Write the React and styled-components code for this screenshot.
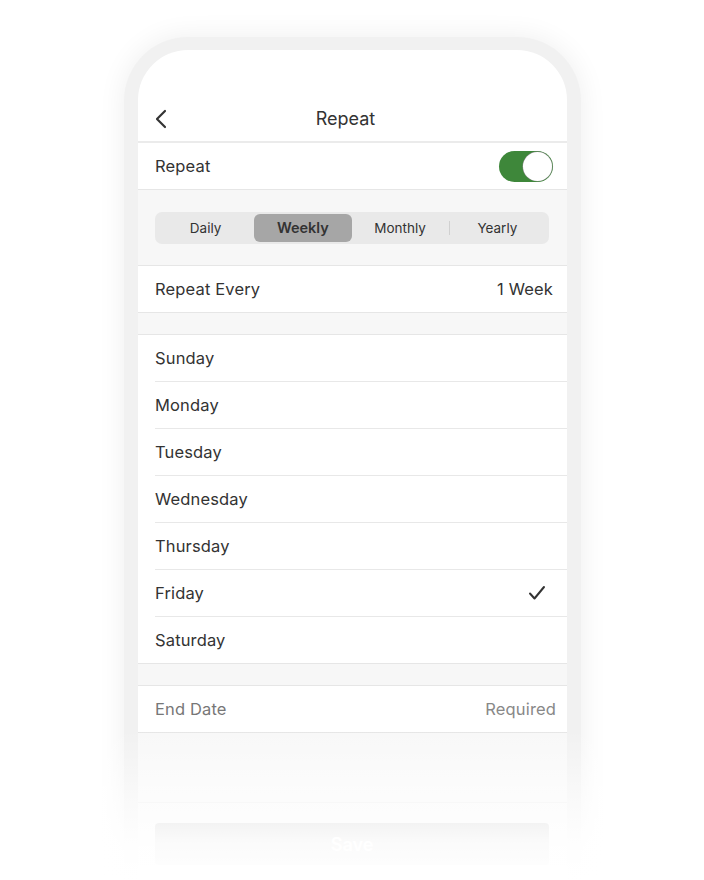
import { useState } from "react";
import styled, { createGlobalStyle } from "styled-components";

const GlobalStyle = createGlobalStyle`
    body {
        margin: 0;
        background: #fff;
        font-family: Inter, "Noto Sans", "Liberation Sans", sans-serif;
        color: #333;
    }
`;

const DAYS = ["Sunday", "Monday", "Tuesday", "Wednesday", "Thursday", "Friday", "Saturday"];
const MODES = ["Daily", "Weekly", "Monthly", "Yearly"];

export default function App() {
    const [on, setOn] = useState(true);
    const [mode, setMode] = useState("Weekly");
    const [day, setDay] = useState("Friday");

    return (
        <Page>
            <GlobalStyle />
            <Phone>
                <Screen>
                    <Nav>
                        <Back aria-label="Back">
                            <svg width="14" height="20" viewBox="0 0 14 20" fill="none">
                                <path d="M11 2 L3 10 L11 18" stroke="#333" strokeWidth="2.2" strokeLinecap="round" strokeLinejoin="round" />
                            </svg>
                        </Back>
                        <Title>Repeat</Title>
                    </Nav>
                    <Row>
                        <Label>Repeat</Label>
                        <Toggle on={on} onClick={() => setOn(!on)}>
                            <Knob on={on} />
                        </Toggle>
                    </Row>
                    <SegmentArea>
                        <Segmented>
                            {MODES.map((m, i) => (
                                <Segment
                                    key={m}
                                    active={mode === m}
                                    divider={i === 3 && mode !== "Monthly" && mode !== "Yearly"}
                                    onClick={() => setMode(m)}
                                >
                                    {m}
                                </Segment>
                            ))}
                        </Segmented>
                    </SegmentArea>
                    <Row topBorder>
                        <Label>Repeat Every</Label>
                        <Value>1 Week</Value>
                    </Row>
                    <Gap />
                    <List>
                        {DAYS.map((d, i) => (
                            <DayRow key={d} last={i === DAYS.length - 1} onClick={() => setDay(d)}>
                                <Label>{d}</Label>
                                {day === d && (
                                    <svg width="18" height="16" viewBox="0 0 18 16" fill="none">
                                        <path d="M2 8.5 L6.5 13.5 L16 2" stroke="#333" strokeWidth="2" strokeLinecap="round" strokeLinejoin="round" />
                                    </svg>
                                )}
                            </DayRow>
                        ))}
                    </List>
                    <Gap />
                    <Row topBorder tight>
                        <Label muted>End Date</Label>
                        <Value muted>Required</Value>
                    </Row>
                    <Footer>
                        <FooterLine />
                        <SaveButton>Save</SaveButton>
                    </Footer>
                </Screen>
            </Phone>
            <Fade />
        </Page>
    );
}

const Page = styled.div`
    position: relative;
    width: 704px;
    height: 880px;
    overflow: hidden;
    background: #fff;
`;

const Phone = styled.div`
    margin: 37px 0 0 124px;
    width: 429px;
    padding: 13px 14px 0;
    border-radius: 64px 64px 0 0;
    background: #f1f1f1;
    box-shadow: 0 0 28px rgba(0, 0, 0, 0.07);
`;

const Screen = styled.div`
    background: #fff;
    border-radius: 50px 50px 0 0;
    overflow: hidden;
    height: 860px;
`;

const Nav = styled.div`
    position: relative;
    height: 93px;
    display: flex;
    align-items: flex-end;
    justify-content: center;
    padding-bottom: 10px;
    box-sizing: border-box;
    border-bottom: 2px solid #ebebeb;
`;

const Back = styled.div`
    position: absolute;
    left: 16px;
    bottom: 12px;
    display: flex;
`;

const Title = styled.div`
    font-size: 18px;
    line-height: 24px;
    color: #333;
    margin-right: 14px;
`;

const Row = styled.div`
    height: 46px;
    padding: 0 ${(p) => (p.tight ? "11px" : "14px")} 0 17px;
    display: flex;
    align-items: center;
    justify-content: space-between;
    background: #fff;
    border-top: ${(p) => (p.topBorder ? "1px solid #e6e6e6" : "none")};
    border-bottom: 1px solid #e6e6e6;
`;

const Label = styled.span`
    font-size: 16.5px;
    color: ${(p) => (p.muted ? "#777" : "#333")};
    letter-spacing: 0.15px;
`;

const Value = styled.span`
    font-size: 16.5px;
    color: ${(p) => (p.muted ? "#888" : "#333")};
    letter-spacing: 0.15px;
`;

const Toggle = styled.div`
    width: 54px;
    height: 31px;
    border-radius: 16px;
    background: ${(p) => (p.on ? "#3e873a" : "#ddd")};
    display: flex;
    align-items: center;
    justify-content: ${(p) => (p.on ? "flex-end" : "flex-start")};
    padding: 1px;
    box-sizing: border-box;
    cursor: pointer;
`;

const Knob = styled.div`
    width: 29px;
    height: 29px;
    border-radius: 50%;
    background: #fff;
    box-shadow: 0 0 0 0.5px #888;
`;

const SegmentArea = styled.div`
    height: 75px;
    background: #f7f7f7;
    display: flex;
    align-items: center;
    padding: 0 18px 0 17px;
`;

const Segmented = styled.div`
    flex: 1;
    height: 32px;
    border-radius: 7px;
    background: #e9e9e9;
    display: grid;
    grid-template-columns: repeat(4, 1fr);
    padding: 2px 3px 2px 2px;
    box-sizing: border-box;
`;

const Segment = styled.div`
    display: flex;
    align-items: center;
    justify-content: center;
    border-radius: 6px;
    background: ${(p) => (p.active ? "#a6a6a6" : "transparent")};
    color: #333;
    font-weight: ${(p) => (p.active ? 600 : 400)};
    font-size: ${(p) => (p.active ? "14.5px" : "13.5px")};
    position: relative;
    cursor: pointer;

    &::before {
        content: "";
        display: ${(p) => (p.divider ? "block" : "none")};
        position: absolute;
        left: 0;
        top: 7px;
        bottom: 7px;
        border-left: 1px solid #d0d0d0;
    }
`;

const Gap = styled.div`
    height: 21px;
    background: #f7f7f7;
`;

const List = styled.div`
    background: #fff;
    border-top: 1px solid #e6e6e6;
    border-bottom: 1px solid #e6e6e6;
    padding-left: 17px;
`;

const DayRow = styled.div`
    height: 46px;
    padding-right: 21px;
    display: flex;
    align-items: center;
    justify-content: space-between;
    border-bottom: ${(p) => (p.last ? "none" : "1px solid #e8e8e8")};
    cursor: pointer;
`;

const Footer = styled.div`
    background: #f8f8f8;
    padding-top: 69px;
`;

const FooterLine = styled.div`
    border-top: 1px solid #ececec;
    margin-bottom: 20px;
`;

const SaveButton = styled.div`
    margin: 0 18px 0 17px;
    height: 42px;
    border-radius: 4px;
    background: #c9c9c9;
    color: #fff;
    display: flex;
    align-items: center;
    justify-content: center;
    font-size: 18px;
    font-weight: 600;
`;

const Fade = styled.div`
    position: absolute;
    left: 0;
    right: 0;
    bottom: 0;
    height: 150px;
    background: linear-gradient(to bottom, rgba(255, 255, 255, 0) 0%, rgba(255, 255, 255, 0.6) 45%, rgba(255, 255, 255, 0.92) 75%, #fff 100%);
    pointer-events: none;
`;
